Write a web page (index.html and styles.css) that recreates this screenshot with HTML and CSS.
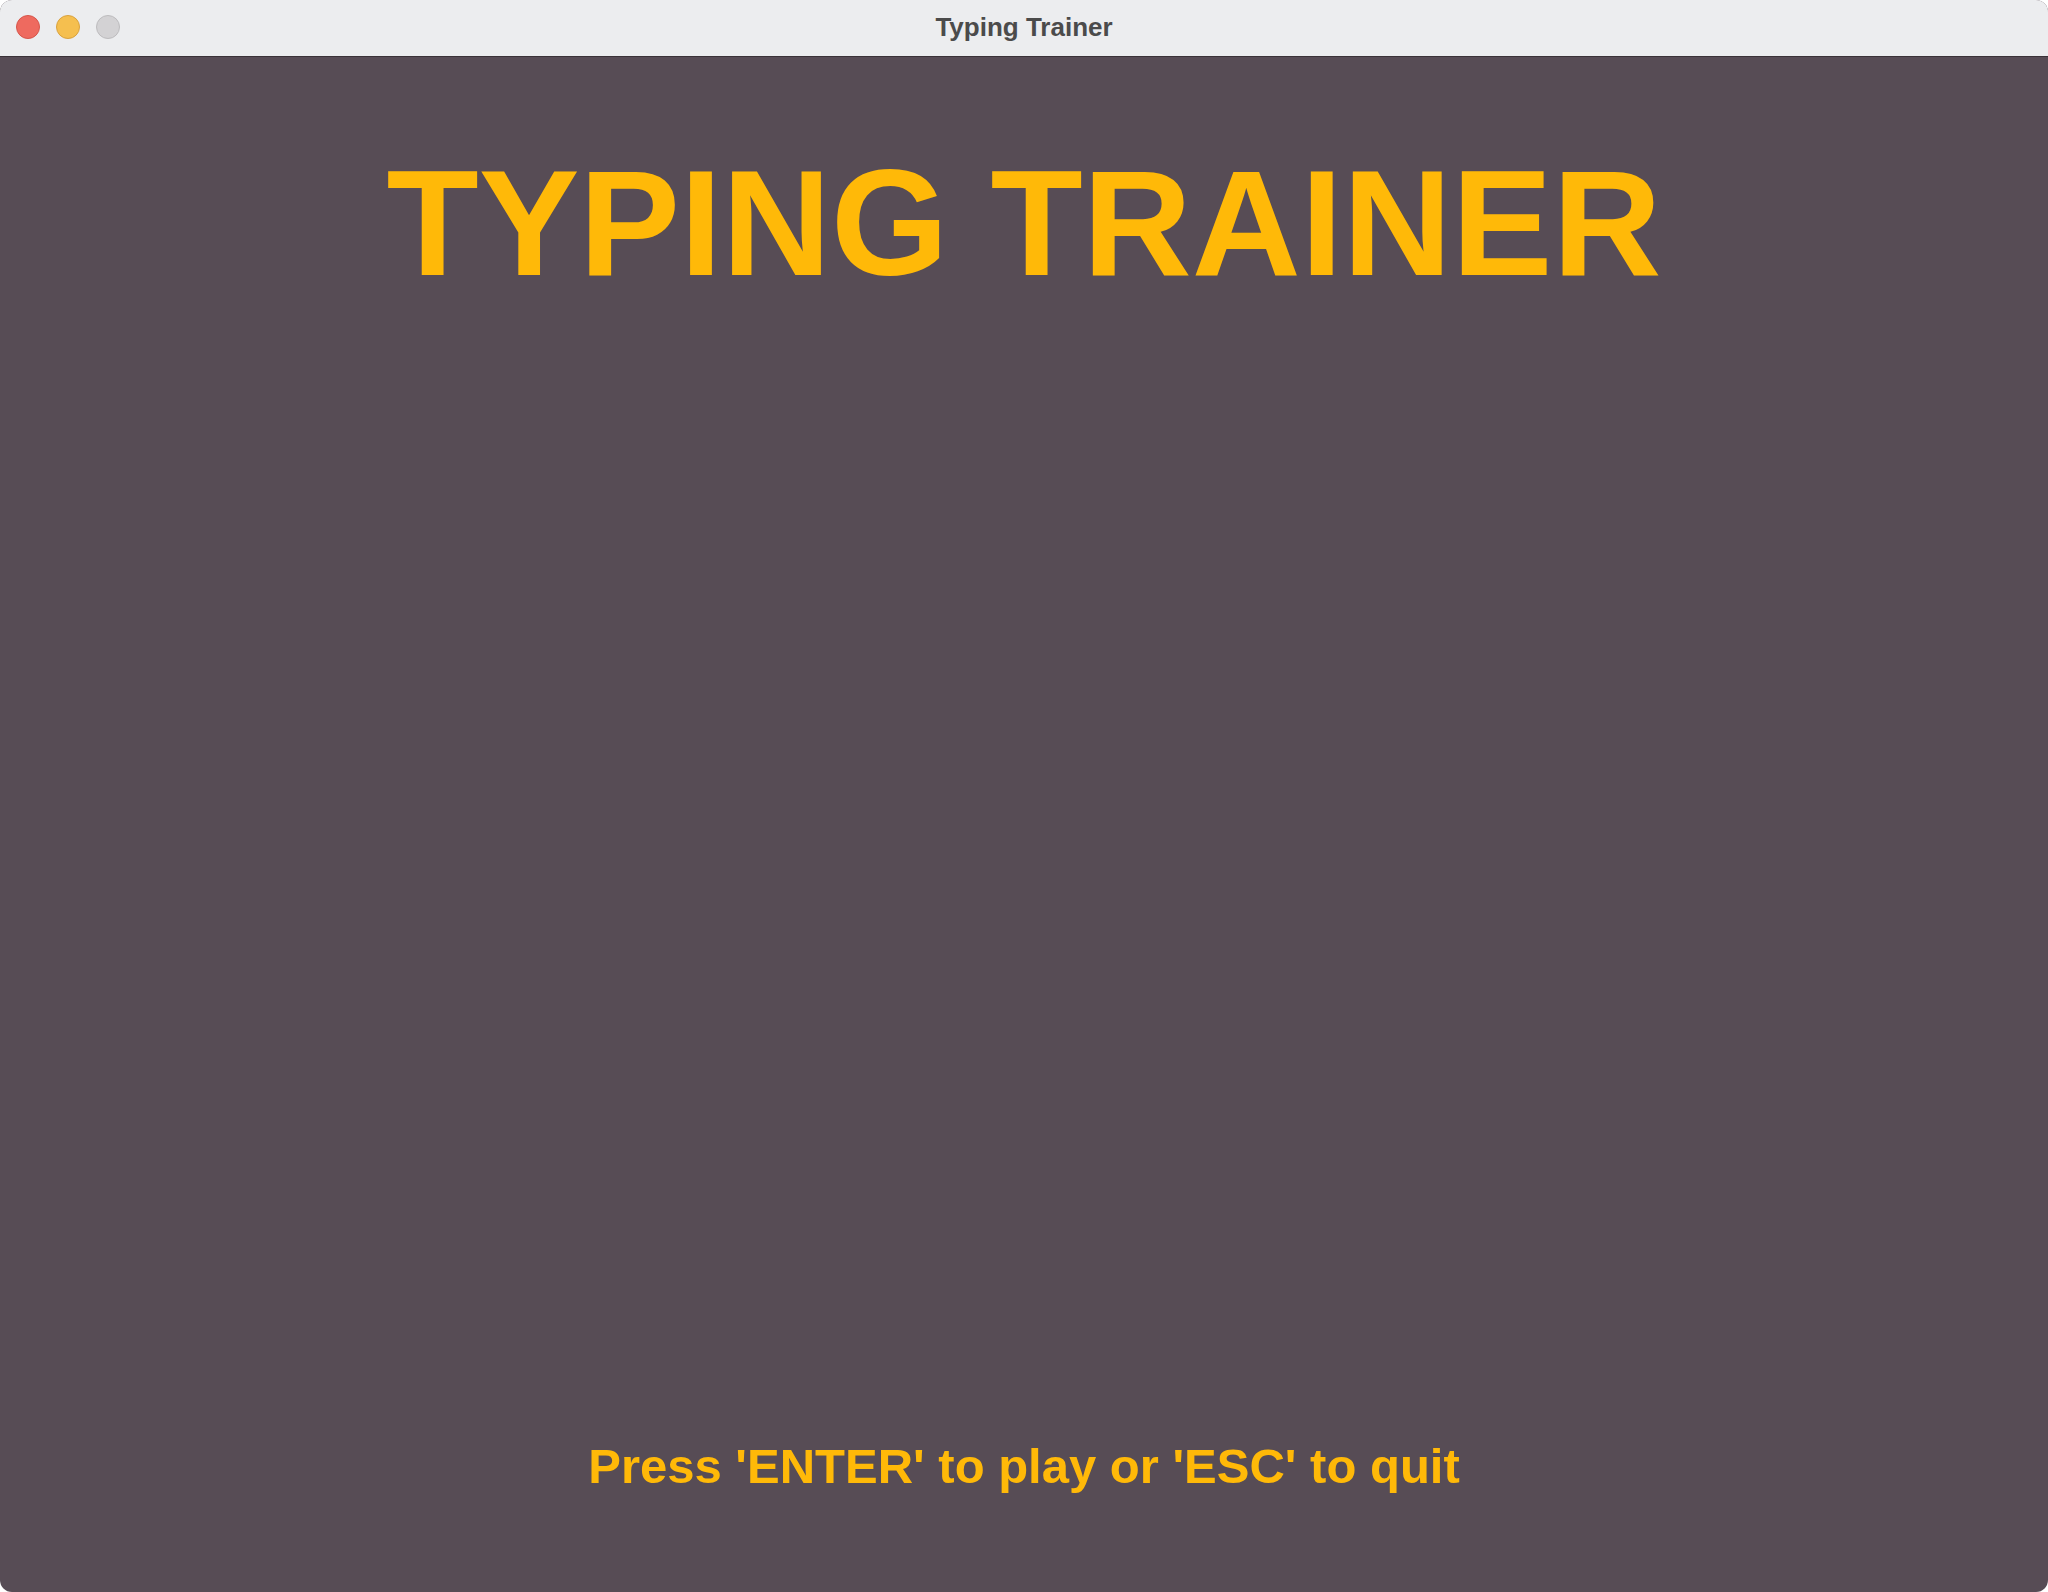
FILE: index.html
```html
<!DOCTYPE html>
<html lang="en">
<head>
<meta charset="utf-8">
<title>Typing Trainer</title>
<link rel="stylesheet" href="styles.css">
</head>
<body>
<div class="window">
  <div class="titlebar">
    <div class="lights">
      <span class="light red"></span>
      <span class="light yellow"></span>
      <span class="light gray"></span>
    </div>
    <div class="wintitle">Typing Trainer</div>
  </div>
  <main class="content">
    <h1 class="title">TYPING TRAINER</h1>
    <p class="prompt">Press 'ENTER' to play or 'ESC' to quit</p>
  </main>
</div>
</body>
</html>
```

FILE: styles.css
```css
html, body {
  margin: 0;
  padding: 0;
  background: #ffffff;
}
body {
  width: 2048px;
  height: 1592px;
  overflow: hidden;
  font-family: "Liberation Sans", Arial, sans-serif;
}
.window {
  width: 2048px;
  height: 1592px;
  border-radius: 12px;
  overflow: hidden;
  display: flex;
  flex-direction: column;
  background: #574c55;
}
.titlebar {
  height: 56px;
  flex: 0 0 56px;
  background: #ecedef;
  border-bottom: 1px solid #3a3238;
  position: relative;
  display: flex;
  align-items: center;
  justify-content: center;
}
.lights {
  position: absolute;
  left: 16px;
  top: 15px;
  display: flex;
  gap: 16px;
}
.light {
  width: 22px;
  height: 22px;
  border-radius: 50%;
  display: block;
}
.red { background: #ee6a5f; border: 1px solid #d6564b; }
.yellow { background: #f5bf4f; border: 1px solid #d9a23f; }
.gray { background: #d3d2d4; border: 1px solid #bdbcbe; }
.wintitle {
  font-weight: bold;
  font-size: 26px;
  color: #4b4b4b;
  line-height: 1;
  margin-top: -2px;
}
.content {
  flex: 1;
  display: flex;
  flex-direction: column;
  align-items: center;
  justify-content: space-between;
  padding: 90px 0 101px;
}
.title {
  margin: 0;
  font-size: 151px;
  line-height: 1;
  font-weight: bold;
  color: #ffb908;
}
.prompt {
  margin: 0;
  font-size: 49px;
  line-height: 1;
  font-weight: bold;
  color: #ffb908;
}
```
